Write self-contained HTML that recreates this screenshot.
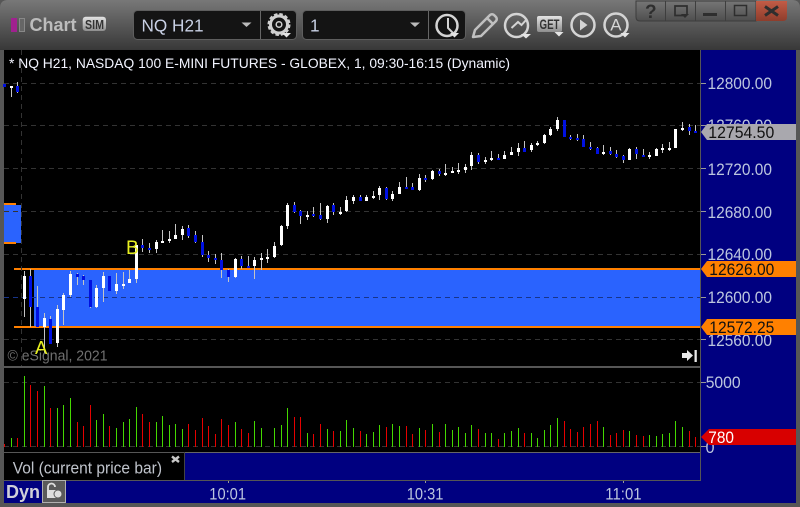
<!DOCTYPE html>
<html><head><meta charset="utf-8"><title>Chart</title>
<style>
html,body{margin:0;padding:0;background:#3a3a3a;width:800px;height:507px;overflow:hidden}
svg{display:block;font-family:"Liberation Sans",sans-serif}
.ax{font-size:16.3px;fill:#bcc6de}
.tag{font-size:16.3px;fill:#111}
</style></head><body>
<svg xmlns="http://www.w3.org/2000/svg" width="800" height="507" viewBox="0 0 800 507">
<defs>
<linearGradient id="tb" x1="0" y1="0" x2="0" y2="1"><stop offset="0" stop-color="#787878"/><stop offset=".4" stop-color="#5e5e5e"/><stop offset="1" stop-color="#383838"/></linearGradient>
<linearGradient id="wb" x1="0" y1="0" x2="0" y2="1"><stop offset="0" stop-color="#767676"/><stop offset="1" stop-color="#4e4e4e"/></linearGradient>
<linearGradient id="wr" x1="0" y1="0" x2="0" y2="1"><stop offset="0" stop-color="#c25c46"/><stop offset="1" stop-color="#8e3d2c"/></linearGradient>
<linearGradient id="sim" x1="0" y1="0" x2="0" y2="1"><stop offset="0" stop-color="#e4e4e4"/><stop offset="1" stop-color="#8e8e8e"/></linearGradient>
</defs>
<!-- frame -->
<rect width="800" height="507" fill="#565656"/>
<path d="M0 50V8Q0 0 8 0H792Q800 0 800 8V50Z" fill="url(#tb)"/>
<!-- chart -->
<rect x="4" y="50" width="696" height="402" fill="#000"/>
<rect x="701" y="50" width="95" height="453" fill="#000080"/>
<rect x="4" y="481" width="792" height="22" fill="#000080"/>
<rect x="185" y="453" width="515" height="27" fill="#000080"/>
<rect x="4" y="453" width="180" height="27" fill="#000"/>
<rect x="700" y="50" width="1" height="431" fill="#555"/>
<rect x="4" y="366" width="696" height="2" fill="#565656"/>
<rect x="184" y="452" width="516" height="1" fill="#666"/>
<rect x="184" y="452" width="1" height="29" fill="#444"/>
<rect x="4" y="480" width="696" height="1" fill="#555"/>
<!-- band -->
<rect x="34" y="270" width="666" height="56" fill="#2a63fe"/>
<rect x="4" y="205" width="17" height="38" fill="#2a63fe"/>
<rect x="14" y="268" width="686" height="2" fill="#ff8000"/>
<rect x="14" y="326" width="686" height="2" fill="#ff8000"/>
<rect x="4" y="203" width="12" height="2" fill="#ff8000"/>
<rect x="4" y="242" width="12" height="2" fill="#ff8000"/>
<!-- grid -->
<g stroke="#333" stroke-width="1" stroke-dasharray="5 4">
<path d="M4 83.5H700M4 125.5H700M4 168.5H700M4 211.5H700M4 254.5H700M4 339.5H700M4 382.5H700M4 446.5H700"/>
<path d="M21.5 50V366"/>
</g>
<path d="M4 297.5H700" stroke="#17348a" stroke-dasharray="5 4"/>
<g id="vol"></g>
<g id="can"></g>
<!-- ticks -->
<path d="M701 83.5h5M701 125.5h5M701 168.5h5M701 211.5h5M701 254.5h5M701 297.5h5M701 339.5h5M701 382.5h5M701 446.5h5M228.5 481v2M425.5 481v2M623.5 481v2" stroke="#999" stroke-width="1"/>
<!-- header -->
<text x="9" y="68" font-size="14" fill="#f2f4ff" textLength="501" lengthAdjust="spacingAndGlyphs">* NQ H21, NASDAQ 100 E-MINI FUTURES - GLOBEX, 1, 09:30-16:15 (Dynamic)</text>
<text x="7.500" y="360.500" font-size="15" fill="#707070" textLength="100" lengthAdjust="spacingAndGlyphs">© eSignal, 2021</text>
<text x="35" y="354" font-size="18.500" fill="#e8f020">A</text>
<text x="126" y="254" font-size="19" fill="#e8f020">B</text>
<!-- axis labels -->
<text class="ax" x="707.500" y="89" textLength="64.500" lengthAdjust="spacingAndGlyphs">12800.00</text>
<text class="ax" x="707.500" y="131" textLength="64.500" lengthAdjust="spacingAndGlyphs">12760.00</text>
<text class="ax" x="707.500" y="175" textLength="64.500" lengthAdjust="spacingAndGlyphs">12720.00</text>
<text class="ax" x="707.500" y="218" textLength="64.500" lengthAdjust="spacingAndGlyphs">12680.00</text>
<text class="ax" x="707.500" y="260" textLength="64.500" lengthAdjust="spacingAndGlyphs">12640.00</text>
<text class="ax" x="707.500" y="303" textLength="64.500" lengthAdjust="spacingAndGlyphs">12600.00</text>
<text class="ax" x="707.500" y="346" textLength="64.500" lengthAdjust="spacingAndGlyphs">12560.00</text>
<text class="ax" x="705.700" y="388" textLength="35" lengthAdjust="spacingAndGlyphs">5000</text>
<text class="ax" x="705.500" y="453">0</text>
<!-- tags -->
<path d="M701 132L707 124H796V140H707Z" fill="#a9a8ae"/>
<text class="tag" x="708.300" y="138" textLength="66" lengthAdjust="spacingAndGlyphs">12754.50</text>
<path d="M701 269L707 261H796V277H707Z" fill="#ff8000"/>
<text class="tag" x="709.300" y="275" textLength="65" lengthAdjust="spacingAndGlyphs">12626.00</text>
<path d="M701 327L707 319H796V335H707Z" fill="#ff8000"/>
<text class="tag" x="709.300" y="333" textLength="65" lengthAdjust="spacingAndGlyphs">12572.25</text>
<path d="M701 437L709 429H796V445H709Z" fill="#d80000"/>
<text x="708.300" y="443" font-size="16.300" fill="#fff" textLength="25.700" lengthAdjust="spacingAndGlyphs">780</text>
<!-- arrow -->
<path d="M682 353h5v-3l6 5.500-6 5.500v-3h-5z" fill="#e8e8e8"/><rect x="694.500" y="350" width="2.300" height="12" fill="#e8e8e8"/>
<!-- bottom -->
<text x="12.700" y="473.300" font-size="16.200" fill="#c0c4cc" textLength="149.300" lengthAdjust="spacingAndGlyphs">Vol (current price bar)</text>
<path d="M172 456.500l7 5.500M179 456.500l-7 5.500" stroke="#c8c8c8" stroke-width="2.400"/>
<text x="6" y="498" font-size="18" font-weight="bold" fill="#d0d0d8">Dyn</text>
<rect x="42.500" y="480.500" width="23" height="22" fill="#5a5a5a" stroke="#b0b0b0"/>
<path d="M48 491v-4a3.500 3.500 0 0 1 7 0" fill="none" stroke="#ddd" stroke-width="1.800"/>
<rect x="47" y="490" width="9" height="8" fill="#ddd"/>
<circle cx="58" cy="494" r="4" fill="#ddd" stroke="#5a5a5a"/>
<text class="ax" x="209.300" y="499.500" textLength="36.700" lengthAdjust="spacingAndGlyphs">10:01</text>
<text class="ax" x="406.700" y="499.500" textLength="36.700" lengthAdjust="spacingAndGlyphs">10:31</text>
<text class="ax" x="605.300" y="499.500" textLength="36.300" lengthAdjust="spacingAndGlyphs">11:01</text>
<!-- title -->
<rect x="11" y="18" width="6" height="14" fill="#a0218f"/>
<rect x="19.500" y="18.500" width="5" height="13" fill="#666" stroke="#888"/>
<text x="29.500" y="31" font-size="18" font-weight="bold" fill="#bcbcbc">Chart</text>
<rect x="82.700" y="16.700" width="23.300" height="14.300" rx="3" fill="url(#sim)"/>
<text x="85" y="29" font-size="13" font-weight="bold" fill="#333" textLength="19" lengthAdjust="spacingAndGlyphs">SIM</text>
<!-- boxes -->
<rect x="133.500" y="10.500" width="163" height="29" rx="4" fill="#141414" stroke="#5e5e5e"/>
<path d="M260.500 11V39" stroke="#666"/>
<text x="141.500" y="31.500" font-size="17.200" fill="#c8d0e4">NQ H21</text>
<path d="M241.500 22.500h10l-5 4.500z" fill="#bbb"/>
<rect x="302.500" y="10.500" width="163" height="29" rx="4" fill="#141414" stroke="#5e5e5e"/>
<path d="M428.500 11V39" stroke="#666"/>
<text x="310" y="31.500" font-size="17.200" fill="#c8d0e4">1</text>
<path d="M410 22.500h10l-5 4.500z" fill="#bbb"/>
<!-- gear -->
<circle cx="279" cy="24.500" r="8.500" fill="none" stroke="#d0d0d0" stroke-width="3"/>
<circle cx="279" cy="24.500" r="10.500" fill="none" stroke="#d0d0d0" stroke-width="2" stroke-dasharray="3.500 2"/>
<circle cx="279" cy="24.500" r="2.800" fill="none" stroke="#d0d0d0" stroke-width="1.500"/>
<path d="M282 33h9l-4.500 4.500z" fill="#e4e4e4"/>
<!-- clock -->
<circle cx="447" cy="25.500" r="10.500" fill="none" stroke="#d4d4d4" stroke-width="2.500"/>
<path d="M448 18v10l5 5" fill="none" stroke="#d4d4d4" stroke-width="2"/>
<path d="M450 33h9l-4.500 4.500z" fill="#e4e4e4"/>
<!-- pencil -->
<path d="M473 37l2-7 15-15q2-1.500 4 0l2 2q1.500 2 0 4l-15 15zM487 18l6 6" fill="none" stroke="#c0c0c0" stroke-width="2.500" stroke-linejoin="round"/>
<!-- line chart -->
<circle cx="516.500" cy="25.500" r="11.500" fill="none" stroke="#d4d4d4" stroke-width="2.500"/>
<path d="M511.500 28l6.500-6 3.500 3 5.500-6" fill="none" stroke="#d4d4d4" stroke-width="2"/>
<path d="M521 34h10l-5 4.500z" fill="#e4e4e4"/>
<!-- GET -->
<rect x="537" y="16" width="25" height="16" rx="2" fill="url(#sim)"/>
<text x="539.500" y="29" font-size="14" font-weight="bold" fill="#333" textLength="20" lengthAdjust="spacingAndGlyphs">GET</text>
<path d="M554.500 32h9l-4.500 4.500z" fill="#e4e4e4"/>
<!-- play -->
<circle cx="583" cy="25" r="11.500" fill="none" stroke="#d4d4d4" stroke-width="2.500"/>
<path d="M580 19.500l7.500 5.500-7.500 5.500z" fill="#d4d4d4"/>
<!-- A -->
<circle cx="616" cy="25" r="11.500" fill="none" stroke="#d4d4d4" stroke-width="2.500"/>
<text x="610.300" y="30.500" font-size="17" fill="#d4d4d4">A</text>
<path d="M620.500 33h9l-4.500 4.500z" fill="#e4e4e4"/>
<!-- window buttons -->
<path d="M636 1H756V21H640Q636 21 636 17Z" fill="url(#wb)" stroke="#3c3c3c"/>
<path d="M756 1H787V17Q787 21 783 21H756Z" fill="url(#wr)"/>
<path d="M665.500 1V21M695.500 1V21M725.500 1V21" stroke="#3e3e3e"/>
<text x="645" y="18" font-size="19" font-weight="bold" fill="#2e2e2e">?</text>
<path d="M684 15.500h-9V6h12v8" fill="none" stroke="#2e2e2e" stroke-width="1.700"/><path d="M681 14h8l-4 4z" fill="#2e2e2e"/>
<rect x="703" y="13" width="14" height="3" fill="#2e2e2e"/>
<rect x="734.500" y="5.500" width="12" height="10" fill="none" stroke="#2e2e2e" stroke-width="1.500"/>
<path d="M765 6.500l13 9M778 6.500l-13 9" stroke="#2e2e2e" stroke-width="3"/>
</svg>
<script>
(function(){
var C=[[4,84,87,84,87,'b'],[11,86,97,86,88,'w'],[17,82,93,86,92,'b']];
function add(list,ox,oy){list.forEach(function(a){C.push([Math.floor(ox+a[0]/3),oy+a[1]/3,oy+a[2]/3,oy+a[3]/3,oy+a[4]/3,a[5]]);});}
add([[73,243,380,258,327,'w'],[91,237,410,258,350,'b'],[112,288,410,351,410,'b'],[133,370,490,384,411,'w'],[151,378,462,387,462,'b'],[172,346,470,357,459,'w'],[190,310,405,315,360,'w'],[211,243,320,252,315,'w'],[232,250,285,252,261,'b'],[250,254,285,258,270,'b'],[271,270,354,270,351,'b'],[289,285,354,294,351,'w'],[310,246,336,258,294,'w'],[328,258,303,258,303,'b'],[349,249,312,282,303,'w'],[370,246,297,282,288,'w'],[388,240,279,267,279,'w'],[409,165,279,165,267,'w'],[427,148,186,166,174,'b'],[448,159,189,174,180,'b'],[469,150,189,156,177,'w'],[487,120,159,153,159,'w'],[508,123,159,147,153,'w'],[526,102,147,135,147,'w'],[547,108,150,117,135,'w'],[565,105,144,114,138,'b'],[586,123,159,135,156,'b'],[607,135,201,156,195,'b'],[625,183,216,195,204,'b'],[646,192,222,204,210,'b']],0,190);
add([[4,309,384,330,360,'b'],[25,357,396,360,381,'b'],[46,324,384,327,381,'w'],[64,319,357,327,348,'b'],[85,318,354,348,354,'b'],[103,322,387,330,348,'w'],[124,309,359,324,330,'w'],[142,297,339,321,327,'w'],[163,276,323,288,321,'w'],[184,225,288,228,285,'w'],[202,159,237,165,228,'w'],[223,156,189,165,186,'b'],[241,180,222,183,198,'b'],[262,183,210,195,201,'w'],[280,171,201,192,198,'b'],[301,159,210,195,207,'b'],[322,165,219,168,207,'w'],[340,159,195,165,186,'b'],[361,171,195,186,192,'w'],[379,138,186,150,183,'w'],[400,135,162,141,153,'w'],[421,135,153,141,153,'b'],[439,135,153,141,153,'w'],[460,123,147,138,144,'w'],[478,108,150,114,135,'w'],[499,111,150,114,147,'b'],[517,123,153,132,147,'w'],[538,96,132,111,132,'w'],[559,81,117,111,117,'b'],[577,99,120,111,120,'b'],[598,72,123,84,120,'w'],[616,75,96,84,90,'b'],[637,60,90,63,87,'w'],[658,57,78,63,72,'b'],[676,42,78,69,75,'w'],[697,51,69,63,69,'w'],[715,39,72,60,66,'w']],220,150);
add([[76,192,219,201,210,'w'],[94,156,210,165,198,'w'],[115,159,192,165,186,'b'],[136,171,192,180,186,'w'],[154,153,183,174,180,'w'],[175,162,180,174,180,'b'],[193,153,177,165,177,'w'],[214,141,165,156,165,'w'],[235,129,168,144,156,'w'],[253,123,156,144,156,'b'],[274,129,156,135,150,'w'],[292,123,138,129,135,'w'],[313,102,132,105,129,'w'],[331,81,108,87,105,'w'],[352,51,93,60,87,'w'],[373,60,111,60,111,'b'],[391,105,120,111,117,'b'],[412,102,123,114,120,'b'],[430,105,141,117,141,'b'],[451,126,150,141,147,'b'],[472,141,162,144,162,'b'],[490,135,165,156,162,'w'],[511,141,165,153,162,'b'],[529,150,174,162,171,'b'],[550,165,189,168,180,'b'],[568,144,180,147,180,'w'],[589,141,177,147,162,'b'],[610,147,171,165,171,'b'],[628,156,177,165,171,'w'],[649,144,168,147,168,'w'],[667,132,159,144,150,'w'],[688,126,153,144,150,'w'],[706,87,144,87,144,'w'],[727,66,93,84,90,'w'],[748,72,105,81,93,'b'],[766,75,99,93,99,'b']],440,100);
var s='';
C.forEach(function(c){
 var x=c[0],t=Math.round(c[1]),b=Math.round(Math.max(c[2],c[4])),bt=Math.round(Math.min(c[3],c[4])),bb=Math.round(Math.max(c[3],c[4]));
 if(bb-bt<2)bb=bt+2;
 s+='<rect x="'+x+'" y="'+t+'" width="1" height="'+(b-t)+'" fill="#c4c4c4"/>';
 s+='<rect x="'+(x-1)+'" y="'+bt+'" width="3" height="'+(bb-bt)+'" fill="'+(c[5]=='w'?'#fff':'#0010e0')+'"/>';
});
document.getElementById('can').innerHTML=s;
var V=[];
function av(list,ox){list.forEach(function(a){V.push([Math.floor(ox+a[0]/3),365+a[1]/3,a[2]]);});}
av([[13,237,'r'],[34,219,'g'],[52,219,'r'],[73,33,'g'],[91,60,'r'],[112,78,'r'],[133,63,'g'],[151,129,'r'],[172,129,'g'],[190,120,'g'],[211,99,'g'],[232,171,'r'],[250,183,'r'],[271,120,'r'],[289,165,'g'],[310,147,'g'],[328,183,'r'],[349,189,'g'],[370,171,'g'],[388,162,'g'],[409,126,'g'],[427,147,'r'],[448,171,'r'],[469,171,'g'],[487,153,'g'],[508,180,'g'],[526,177,'g'],[547,192,'g'],[565,177,'r'],[586,195,'r'],[607,159,'r'],[625,183,'r'],[646,207,'r'],[664,162,'r'],[685,180,'r'],[706,171,'g'],[724,192,'r'],[745,204,'r'],[763,168,'g'],[784,189,'g']],0);
av([[13,189,'g'],[34,180,'g'],[52,129,'g'],[73,156,'r'],[91,156,'r'],[112,204,'g'],[130,207,'r'],[151,177,'r'],[172,192,'g'],[190,198,'r'],[211,198,'g'],[229,165,'g'],[250,189,'g'],[271,198,'r'],[289,207,'g'],[310,201,'g'],[328,180,'g'],[349,186,'r'],[367,177,'g'],[388,183,'g'],[409,183,'r'],[427,207,'r'],[448,189,'g'],[466,195,'r'],[487,177,'g'],[508,201,'r'],[526,177,'g'],[547,195,'g'],[565,186,'g'],[586,204,'g'],[604,180,'g'],[625,192,'r'],[646,204,'g'],[664,204,'g'],[685,222,'r'],[703,204,'g'],[724,198,'g'],[745,189,'g'],[763,204,'r'],[784,204,'g'],[802,219,'g']],270);
av([[43,195,'g'],[61,180,'g'],[82,159,'g'],[103,168,'r'],[121,192,'r'],[142,201,'r'],[160,186,'r'],[181,177,'r'],[202,168,'r'],[220,186,'g'],[241,210,'r'],[259,204,'r'],[280,195,'r'],[298,198,'g'],[319,210,'r'],[340,213,'r'],[358,210,'g'],[379,213,'g'],[397,207,'g'],[418,204,'g'],[436,168,'g'],[457,186,'g'],[478,198,'r'],[496,216,'r']],530);
var v='';
V.forEach(function(a){var t=Math.round(a[1]);v+='<rect x="'+a[0]+'" y="'+t+'" width="1" height="'+(447-t)+'" fill="'+(a[2]=='g'?'#44d800':'#e60000')+'"/>';});
document.getElementById('vol').innerHTML=v;
})();
</script>
</body></html>
